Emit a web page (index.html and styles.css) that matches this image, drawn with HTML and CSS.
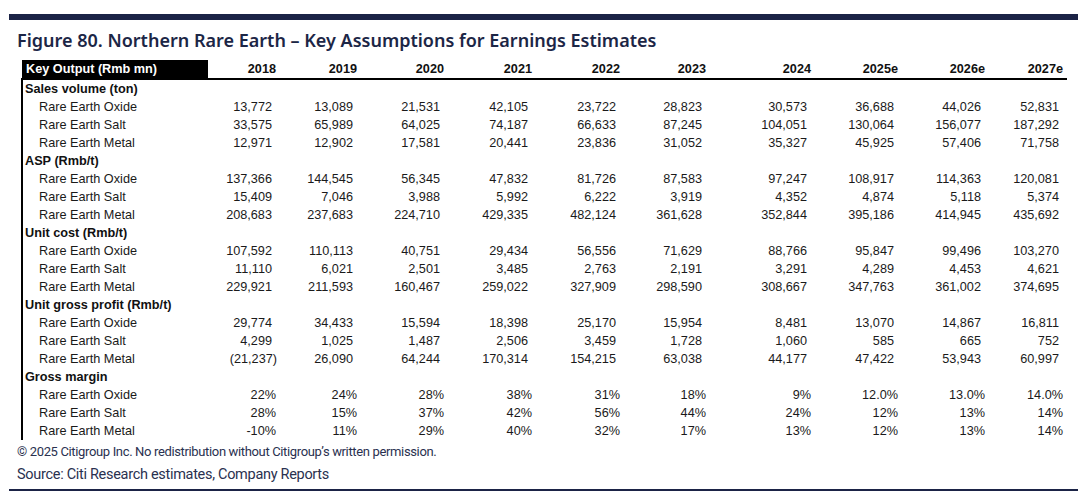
FILE: index.html
```html
<!DOCTYPE html>
<html>
<head>
<meta charset="utf-8">
<link rel="stylesheet" href="styles.css">
</head>
<body>
<div class="page">
  <div class="topbar"></div>
  <h1 class="title">Figure 80. Northern Rare Earth – Key Assumptions for Earnings Estimates</h1>
  <table class="data">
    <colgroup>
      <col class="c-label">
      <col class="c18"><col class="c19"><col class="c20"><col class="c21"><col class="c22">
      <col class="c23"><col class="c24"><col class="c25"><col class="c26"><col class="c27">
    </colgroup>
    <thead>
      <tr>
        <th class="label">Key Output (Rmb mn)</th>
        <th>2018</th><th>2019</th><th>2020</th><th>2021</th><th>2022</th>
        <th>2023</th><th>2024</th><th>2025e</th><th>2026e</th><th>2027e</th>
      </tr>
    </thead>
    <tbody>
      <tr class="sec"><td colspan="11">Sales volume (ton)</td></tr>
      <tr><td class="item">Rare Earth Oxide</td><td>13,772</td><td>13,089</td><td>21,531</td><td>42,105</td><td>23,722</td><td>28,823</td><td>30,573</td><td>36,688</td><td>44,026</td><td>52,831</td></tr>
      <tr><td class="item">Rare Earth Salt</td><td>33,575</td><td>65,989</td><td>64,025</td><td>74,187</td><td>66,633</td><td>87,245</td><td>104,051</td><td>130,064</td><td>156,077</td><td>187,292</td></tr>
      <tr><td class="item">Rare Earth Metal</td><td>12,971</td><td>12,902</td><td>17,581</td><td>20,441</td><td>23,836</td><td>31,052</td><td>35,327</td><td>45,925</td><td>57,406</td><td>71,758</td></tr>
      <tr class="sec"><td colspan="11">ASP (Rmb/t)</td></tr>
      <tr><td class="item">Rare Earth Oxide</td><td>137,366</td><td>144,545</td><td>56,345</td><td>47,832</td><td>81,726</td><td>87,583</td><td>97,247</td><td>108,917</td><td>114,363</td><td>120,081</td></tr>
      <tr><td class="item">Rare Earth Salt</td><td>15,409</td><td>7,046</td><td>3,988</td><td>5,992</td><td>6,222</td><td>3,919</td><td>4,352</td><td>4,874</td><td>5,118</td><td>5,374</td></tr>
      <tr><td class="item">Rare Earth Metal</td><td>208,683</td><td>237,683</td><td>224,710</td><td>429,335</td><td>482,124</td><td>361,628</td><td>352,844</td><td>395,186</td><td>414,945</td><td>435,692</td></tr>
      <tr class="sec"><td colspan="11">Unit cost (Rmb/t)</td></tr>
      <tr><td class="item">Rare Earth Oxide</td><td>107,592</td><td>110,113</td><td>40,751</td><td>29,434</td><td>56,556</td><td>71,629</td><td>88,766</td><td>95,847</td><td>99,496</td><td>103,270</td></tr>
      <tr><td class="item">Rare Earth Salt</td><td>11,110</td><td>6,021</td><td>2,501</td><td>3,485</td><td>2,763</td><td>2,191</td><td>3,291</td><td>4,289</td><td>4,453</td><td>4,621</td></tr>
      <tr><td class="item">Rare Earth Metal</td><td>229,921</td><td>211,593</td><td>160,467</td><td>259,022</td><td>327,909</td><td>298,590</td><td>308,667</td><td>347,763</td><td>361,002</td><td>374,695</td></tr>
      <tr class="sec"><td colspan="11">Unit gross profit (Rmb/t)</td></tr>
      <tr><td class="item">Rare Earth Oxide</td><td>29,774</td><td>34,433</td><td>15,594</td><td>18,398</td><td>25,170</td><td>15,954</td><td>8,481</td><td>13,070</td><td>14,867</td><td>16,811</td></tr>
      <tr><td class="item">Rare Earth Salt</td><td>4,299</td><td>1,025</td><td>1,487</td><td>2,506</td><td>3,459</td><td>1,728</td><td>1,060</td><td>585</td><td>665</td><td>752</td></tr>
      <tr><td class="item">Rare Earth Metal</td><td class="neg">(21,237)</td><td>26,090</td><td>64,244</td><td>170,314</td><td>154,215</td><td>63,038</td><td>44,177</td><td>47,422</td><td>53,943</td><td>60,997</td></tr>
      <tr class="sec"><td colspan="11">Gross margin</td></tr>
      <tr class="pct"><td class="item">Rare Earth Oxide</td><td>22%</td><td>24%</td><td>28%</td><td>38%</td><td>31%</td><td>18%</td><td>9%</td><td>12.0%</td><td>13.0%</td><td>14.0%</td></tr>
      <tr class="pct"><td class="item">Rare Earth Salt</td><td>28%</td><td>15%</td><td>37%</td><td>42%</td><td>56%</td><td>44%</td><td>24%</td><td>12%</td><td>13%</td><td>14%</td></tr>
      <tr class="pct"><td class="item">Rare Earth Metal</td><td>-10%</td><td>11%</td><td>29%</td><td>40%</td><td>32%</td><td>17%</td><td>13%</td><td>12%</td><td>13%</td><td>14%</td></tr>
    </tbody>
  </table>
  <p class="copy">© 2025 Citigroup Inc. No redistribution without Citigroup’s written permission.</p>
  <p class="source">Source: Citi Research estimates, Company Reports</p>
  <div class="bottomline"></div>
</div>
</body>
</html>
```

FILE: styles.css
```css
html, body {
  margin: 0;
  padding: 0;
  background: #ffffff;
}

.page {
  width: 1069px;
  margin-left: 9px;
  padding-top: 14px;
}

.topbar {
  height: 6px;
  background: #1b2346;
}

.title {
  margin: 8px 0 8px 8px;
  font-family: "Noto Sans", sans-serif;
  font-weight: 600;
  font-size: 18px;
  line-height: 24px;
  color: #1c2646;
  letter-spacing: 0;
}

.data {
  margin-left: 12px;
  border-collapse: collapse;
  table-layout: fixed;
  width: 1046px;
  font-family: "Liberation Sans", Arial, sans-serif;
  font-size: 12.7px;
  color: #1a1a1a;
}

.c-label { width: 186px; }
.c18 { width: 72px; }
.c19 { width: 81px; }
.c20 { width: 87px; }
.c21 { width: 88px; }
.c22 { width: 88px; }
.c23 { width: 86px; }
.c24 { width: 105px; }
.c25 { width: 87px; }
.c26 { width: 87px; }
.c27 { width: 78px; }

.data th {
  height: 18px;
  padding: 0 4px 0 0;
  line-height: 16px;
  font-weight: bold;
  text-align: right;
  border-bottom: 2.5px solid #000;
  color: #111;
}

.data th.label {
  background: #000;
  color: #fff;
  text-align: left;
  padding-left: 4px;
}

.data td {
  height: 18px;
  padding: 0 8px 0 0;
  line-height: 18px;
  text-align: right;
  white-space: nowrap;
}

.data td:first-child {
  border-left: 2px solid #000;
  text-align: left;
}

.data tr.sec td {
  font-weight: bold;
  padding-left: 2px;
  color: #111;
}

.data td.item {
  padding-left: 16px;
}

.data td.neg {
  padding-right: 3px;
}

.data tr.pct td {
  padding-right: 4px;
}

.data tr.pct td.item {
  padding-right: 0;
}

.copy {
  margin: 2px 0 0 8px;
  font-family: "Roboto", sans-serif;
  font-size: 13px;
  line-height: 20px;
  letter-spacing: -0.35px;
  color: #2a3150;
}

.source {
  margin: 3px 0 0 8px;
  font-family: "Roboto", sans-serif;
  font-size: 14.5px;
  line-height: 20px;
  letter-spacing: -0.3px;
  color: #2a3150;
}

.bottomline {
  margin-top: 4px;
  height: 2px;
  background: #1b2346;
}
```
